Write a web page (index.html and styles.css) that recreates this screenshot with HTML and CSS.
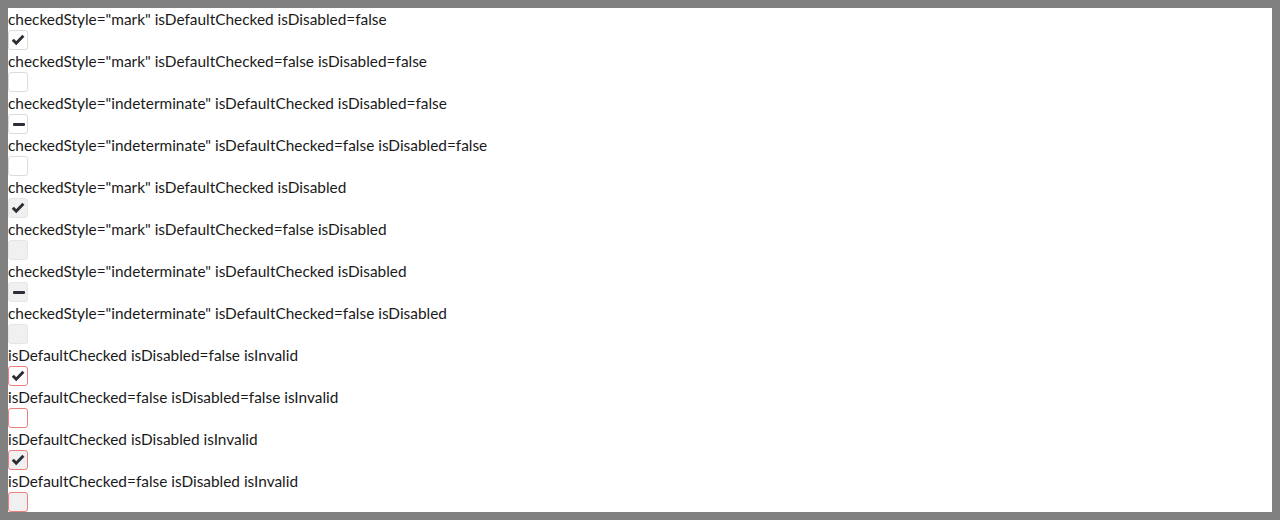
FILE: index.html
```html
<!DOCTYPE html>
<html>
<head>
<meta charset="utf-8">
<link rel="stylesheet" href="styles.css">
</head>
<body>
<div class="case"><div class="label">checkedStyle="mark" isDefaultChecked isDisabled=false</div>
<span class="box"><svg class="icon" viewBox="0 0 20 20"><path d="M4.8 9.8 L8.2 13.2 L15.4 5.8"/></svg></span></div>
<div class="case"><div class="label">checkedStyle="mark" isDefaultChecked=false isDisabled=false</div>
<span class="box"></span></div>
<div class="case"><div class="label">checkedStyle="indeterminate" isDefaultChecked isDisabled=false</div>
<span class="box"><span class="bar"></span></span></div>
<div class="case"><div class="label">checkedStyle="indeterminate" isDefaultChecked=false isDisabled=false</div>
<span class="box"></span></div>
<div class="case"><div class="label">checkedStyle="mark" isDefaultChecked isDisabled</div>
<span class="box disabled"><svg class="icon" viewBox="0 0 20 20"><path d="M4.8 9.8 L8.2 13.2 L15.4 5.8"/></svg></span></div>
<div class="case"><div class="label">checkedStyle="mark" isDefaultChecked=false isDisabled</div>
<span class="box disabled"></span></div>
<div class="case"><div class="label">checkedStyle="indeterminate" isDefaultChecked isDisabled</div>
<span class="box disabled"><span class="bar"></span></span></div>
<div class="case"><div class="label">checkedStyle="indeterminate" isDefaultChecked=false isDisabled</div>
<span class="box disabled"></span></div>
<div class="case"><div class="label">isDefaultChecked isDisabled=false isInvalid</div>
<span class="box invalid"><svg class="icon" viewBox="0 0 20 20"><path d="M4.8 9.8 L8.2 13.2 L15.4 5.8"/></svg></span></div>
<div class="case"><div class="label">isDefaultChecked=false isDisabled=false isInvalid</div>
<span class="box invalid"></span></div>
<div class="case"><div class="label">isDefaultChecked isDisabled isInvalid</div>
<span class="box invalid disabled"><svg class="icon" viewBox="0 0 20 20"><path d="M4.8 9.8 L8.2 13.2 L15.4 5.8"/></svg></span></div>
<div class="case"><div class="label">isDefaultChecked=false isDisabled isInvalid</div>
<span class="box invalid disabled"></span></div>
</body>
</html>
```
FILE: styles.css
```css
html {
  background: #808080;
}
body {
  margin: 8px;
  background: #ffffff;
  color: #1a1a1a;
  font-family: Lato, "Noto Sans", sans-serif;
  font-size: 15.4px;
}
.case {
  display: flex;
  flex-direction: column;
  align-items: flex-start;
}
.label {
  height: 22px;
  line-height: 22px;
  white-space: nowrap;
}
.box {
  box-sizing: border-box;
  width: 20px;
  height: 20px;
  border: 1px solid #dcdcdc;
  border-radius: 3px;
  background: #ffffff;
  display: flex;
  align-items: center;
  justify-content: center;
}
.box.disabled {
  background: #f0f0f0;
  border-color: #e6e6e6;
}
.box.invalid {
  border-color: #ef7f7f;
}
.icon {
  width: 20px;
  height: 20px;
  flex: none;
  fill: none;
  stroke: #2b2e37;
  stroke-width: 3;
  stroke-linecap: butt;
  stroke-linejoin: miter;
}
.bar {
  width: 12px;
  height: 3px;
  margin-left: 1px;
  background: #2b2e37;
  border-radius: 1px;
}
```
